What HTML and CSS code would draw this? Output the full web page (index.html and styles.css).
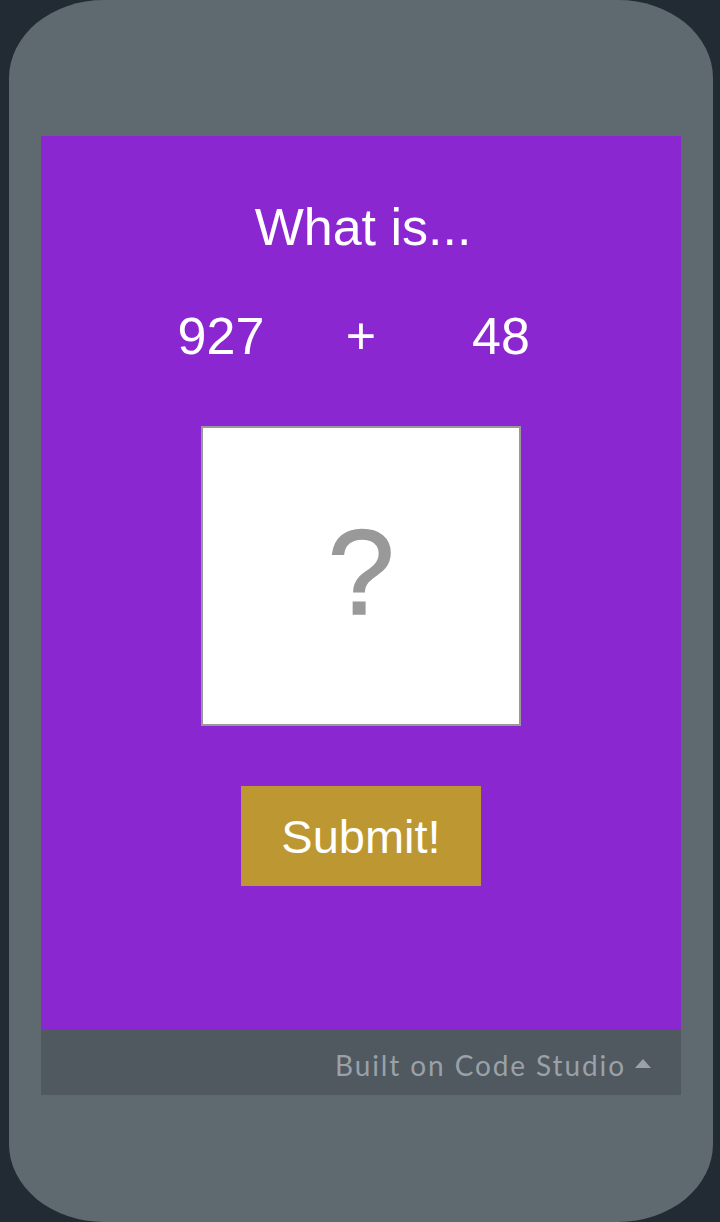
FILE: index.html
```html
<!DOCTYPE html>
<html>
<head>
<meta charset="utf-8">
<link rel="stylesheet" href="styles.css">
</head>
<body>
<div class="phone">
  <div class="screen">
    <div class="title">What is...</div>
    <div class="sum">
      <span>927</span>
      <span>+</span>
      <span>48</span>
    </div>
    <div class="answer"><span>?</span></div>
    <div class="submit">Submit!</div>
  </div>
  <div class="footer">
    <span class="built">Built on Code Studio</span>
    <span class="caret"></span>
  </div>
</div>
</body>
</html>
```
FILE: styles.css
```css
html, body {
  margin: 0;
  padding: 0;
}
body {
  background: #222b33;
  width: 720px;
  height: 1222px;
  overflow: hidden;
}
.phone {
  margin-left: 9px;
  width: 704px;
  height: 1222px;
  box-sizing: border-box;
  padding: 136px 32px 0 32px;
  background: #5f6a70;
  border-radius: 95px / 78px;
}
.screen {
  height: 894px;
  background: #8b27d0;
  display: flex;
  flex-direction: column;
  align-items: center;
  font-family: "Liberation Sans", Arial, sans-serif;
  color: #ffffff;
  padding-top: 61px;
  box-sizing: border-box;
}
.title {
  font-size: 52px;
  line-height: 60px;
  margin-left: 4px;
}
.sum {
  margin-top: 49px;
  display: grid;
  grid-template-columns: 140px 140px 140px;
  font-size: 52px;
  line-height: 60px;
  text-align: center;
}
.answer {
  margin-top: 60px;
  width: 320px;
  height: 300px;
  box-sizing: border-box;
  border: 2px solid #999999;
  background: #ffffff;
  display: flex;
  align-items: center;
  justify-content: center;
  color: #999999;
  font-size: 120px;
  line-height: 120px;
  -webkit-text-stroke: 1.5px #999999;
}
.answer span {
  margin-top: -8px;
}
.submit {
  margin-top: 60px;
  width: 240px;
  height: 100px;
  background: #bd9731;
  display: flex;
  align-items: center;
  justify-content: center;
  font-size: 47px;
  line-height: 47px;
}
.footer {
  height: 65px;
  background: #505860;
  display: flex;
  align-items: center;
  justify-content: flex-end;
  padding-right: 30px;
  color: #9aa1a8;
  font-family: "Lato", "Open Sans", sans-serif;
  font-size: 28px;
}
.built {
  letter-spacing: 1.9px;
  margin-top: 4px;
}
.caret {
  width: 0;
  height: 0;
  margin-left: 9px;
  border-left: 8px solid transparent;
  border-right: 8px solid transparent;
  border-bottom: 9px solid #9aa1a8;
  margin-top: 2px;
}
```
